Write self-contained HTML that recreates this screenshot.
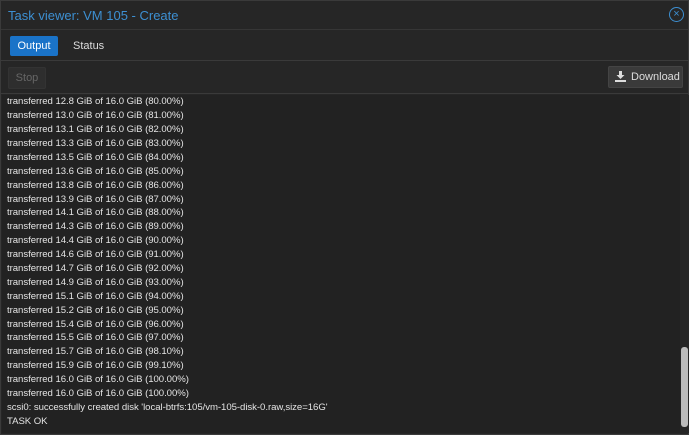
<!DOCTYPE html>
<html><head><style>
*{margin:0;padding:0;box-sizing:border-box}
body{width:689px;height:435px;background:#2a2a2a;font-family:"Liberation Sans",sans-serif;overflow:hidden;position:relative}
.win{position:absolute;left:0;top:0;width:689px;height:435px;border:1px solid #3a3a3a;background:#262626}
.title{position:absolute;left:0;top:0;width:687px;height:29px;background:#262626;border-bottom:1px solid #363636}
.title span{position:absolute;left:7px;top:7px;color:#3d8fd1;font-size:13px}
.close{position:absolute;right:4px;top:6px;width:15px;height:15px;border:1.5px solid #3d8fd1;border-radius:50%;color:#3d8fd1;font-size:11px;line-height:12px;text-align:center}
.tabs{position:absolute;left:0;top:30px;width:687px;height:30px;background:#262626;border-bottom:1px solid #3a3a3a}
.tab1{position:absolute;left:9px;top:5px;width:48px;height:20px;background:#1a73c8;color:#fff;font-size:11px;line-height:20px;text-align:center;border-radius:2px}
.tab2{position:absolute;left:72px;top:9px;color:#ddd;font-size:11px}
.tb{position:absolute;left:0;top:61px;width:687px;height:32px;background:#262626;border-bottom:1px solid #3a3a3a}
.stop{position:absolute;left:7px;top:5px;width:38px;height:22px;background:#2e2e2e;border:1px solid #333;border-radius:2px;color:#666;font-size:11px;line-height:20px;text-align:center}
.dl{position:absolute;right:5px;top:4px;width:75px;height:22px;background:#3a3a3a;border:1px solid #444;border-radius:2px;color:#ddd;font-size:11px;line-height:20px;padding-left:22px}
.dl svg{position:absolute;left:6px;top:4px}
.log{position:absolute;left:1px;top:94px;width:678px;height:338px;background:#222;color:#e4e4e4;font-size:9.6px;overflow:hidden}
.log div{position:absolute;left:5px;white-space:nowrap;letter-spacing:-0.05px}
.sb{position:absolute;left:679px;top:94px;width:9px;height:338px;background:#262626}
.thumb{position:absolute;left:1px;top:252px;width:7px;height:80px;background:#bbb;border-radius:3px}
</style></head><body>
<div class="win">
<div class="title"><span>Task viewer: VM 105 - Create</span><div class="close">×</div></div>
<div class="tabs"><div class="tab1">Output</div><div class="tab2">Status</div></div>
<div class="tb"><div class="stop">Stop</div><div class="dl"><svg width="11" height="11" viewBox="0 0 11 11"><path d="M4 0h3v4h2.5L5.5 8 1.5 4H4z" fill="#ddd"/><rect x="0" y="9" width="11" height="2" fill="#ddd"/></svg>Download</div></div>
<div class="log">
<div style="top:1px">transferred 12.8 GiB of 16.0 GiB (80.00%)</div>
<div style="top:15px">transferred 13.0 GiB of 16.0 GiB (81.00%)</div>
<div style="top:29px">transferred 13.1 GiB of 16.0 GiB (82.00%)</div>
<div style="top:43px">transferred 13.3 GiB of 16.0 GiB (83.00%)</div>
<div style="top:57px">transferred 13.5 GiB of 16.0 GiB (84.00%)</div>
<div style="top:71px">transferred 13.6 GiB of 16.0 GiB (85.00%)</div>
<div style="top:85px">transferred 13.8 GiB of 16.0 GiB (86.00%)</div>
<div style="top:99px">transferred 13.9 GiB of 16.0 GiB (87.00%)</div>
<div style="top:112px">transferred 14.1 GiB of 16.0 GiB (88.00%)</div>
<div style="top:126px">transferred 14.3 GiB of 16.0 GiB (89.00%)</div>
<div style="top:140px">transferred 14.4 GiB of 16.0 GiB (90.00%)</div>
<div style="top:154px">transferred 14.6 GiB of 16.0 GiB (91.00%)</div>
<div style="top:168px">transferred 14.7 GiB of 16.0 GiB (92.00%)</div>
<div style="top:182px">transferred 14.9 GiB of 16.0 GiB (93.00%)</div>
<div style="top:196px">transferred 15.1 GiB of 16.0 GiB (94.00%)</div>
<div style="top:210px">transferred 15.2 GiB of 16.0 GiB (95.00%)</div>
<div style="top:224px">transferred 15.4 GiB of 16.0 GiB (96.00%)</div>
<div style="top:237px">transferred 15.5 GiB of 16.0 GiB (97.00%)</div>
<div style="top:251px">transferred 15.7 GiB of 16.0 GiB (98.10%)</div>
<div style="top:265px">transferred 15.9 GiB of 16.0 GiB (99.10%)</div>
<div style="top:279px">transferred 16.0 GiB of 16.0 GiB (100.00%)</div>
<div style="top:293px">transferred 16.0 GiB of 16.0 GiB (100.00%)</div>
<div style="top:307px">scsi0: successfully created disk 'local-btrfs:105/vm-105-disk-0.raw,size=16G'</div>
<div style="top:321px">TASK OK</div>
</div>
<div class="sb"><div class="thumb"></div></div>
</div>
</body></html>
